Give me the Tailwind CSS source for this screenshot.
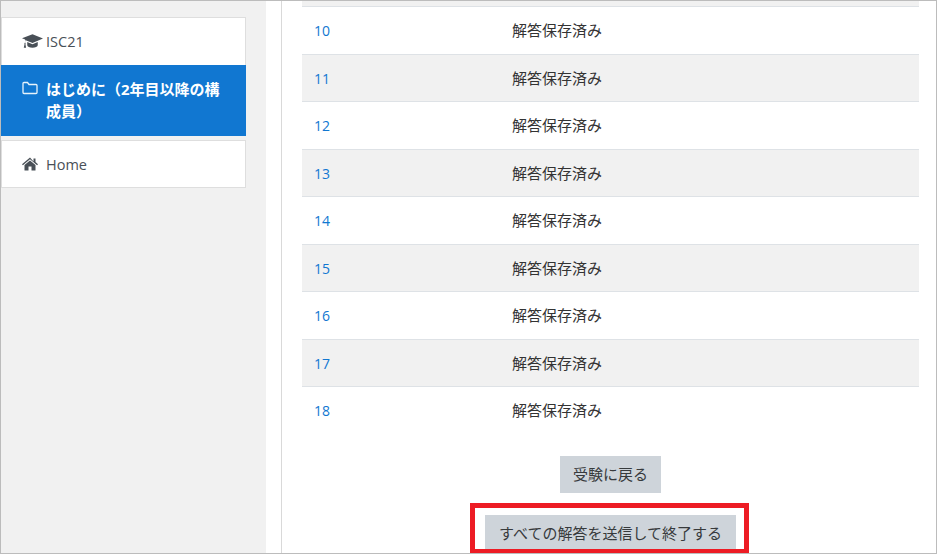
<!DOCTYPE html>
<html lang="ja">
<head>
<meta charset="utf-8">
<script src="https://cdn.jsdelivr.net/npm/@tailwindcss/browser@4"></script>
</head>
<body class="bg-white">
<div class="relative flex w-[937px] h-[554px] overflow-hidden border border-[#bcbcbc] bg-white text-[15px] text-[#333] font-['Open_Sans','Noto_Sans_CJK_JP',sans-serif]">
  <aside class="w-[265px] shrink-0 bg-[#f1f1f1] pt-4">
    <div class="w-[245px]">
      <div class="flex h-[48px] items-center gap-[3px] border border-[#dedede] border-b-0 bg-white pl-5 text-[#495057]">
        <svg class="w-[21px] h-[17px] shrink-0" viewBox="0 0 20 16"><path fill="#495057" d="M10 1 0 5l3 1.200V9c-.6.3-.8 1-.6 1.600l-.7 3.400h2.200l-.6-3.400c.3-.5.1-1.200-.4-1.600V6.600L10 9.400 20 5.200z"/><path fill="#495057" d="M5 8.400v3.200c0 1.200 2.300 2.400 5 2.400s5-1.200 5-2.400V8.400l-5 2.100z"/></svg>
        <span class="text-[14.5px]">ISC21</span>
      </div>
      <div class="flex h-[71px] items-start gap-[8px] bg-[#1177d1] pl-[21px] pr-4 pt-[13px] font-bold leading-[22px] text-white">
        <svg class="mt-[3px] w-[16px] h-[14px] shrink-0" viewBox="0 0 16 14" fill="none" stroke="#e8f3fb" stroke-width="1.300"><path d="M1 2.500a1 1 0 0 1 1-1h3.500l1.500 2h7a1 1 0 0 1 1 1v7a1 1 0 0 1-1 1H2a1 1 0 0 1-1-1z"/></svg>
        <span>はじめに（2年目以降の構成員）</span>
      </div>
      <div class="mt-1 flex h-[48px] items-center gap-[8px] border border-[#dedede] bg-white pl-5 text-[#495057]">
        <svg class="w-[16px] h-[14px] shrink-0" viewBox="0 0 16 14"><path fill="#495057" d="M8 .5 0 7.200l.9 1L8 2.300l7.100 5.900.9-1-2.500-2.100V1.500h-2v2.900z"/><path fill="#495057" d="M8 3.500 2.500 8v5.500H6.500V9.500h3v4h4V8z"/></svg>
        <span class="pt-px text-[14.5px]">Home</span>
      </div>
    </div>
  </aside>
  <div class="w-[15px] shrink-0"></div>
  <main class="flex-1 border-l border-[#d9d9d9] pl-5 pr-[17px]">
    <div class="h-[6px] border-b border-[#dee2e6] bg-[#f1f1f1]"></div>
    <div class="grid grid-cols-[198px_1fr] items-center h-[48px] border-b border-[#dee2e6] pl-[12px]"><a class="text-[14px] text-[#1177d1]">10</a><span>解答保存済み</span></div>
    <div class="grid grid-cols-[198px_1fr] items-center h-[47px] border-b border-[#dee2e6] bg-[#f1f1f1] pl-[12px]"><a class="text-[14px] text-[#1177d1]">11</a><span>解答保存済み</span></div>
    <div class="grid grid-cols-[198px_1fr] items-center h-[48px] border-b border-[#dee2e6] pl-[12px]"><a class="text-[14px] text-[#1177d1]">12</a><span>解答保存済み</span></div>
    <div class="grid grid-cols-[198px_1fr] items-center h-[47px] border-b border-[#dee2e6] bg-[#f1f1f1] pl-[12px]"><a class="text-[14px] text-[#1177d1]">13</a><span>解答保存済み</span></div>
    <div class="grid grid-cols-[198px_1fr] items-center h-[48px] border-b border-[#dee2e6] pl-[12px]"><a class="text-[14px] text-[#1177d1]">14</a><span>解答保存済み</span></div>
    <div class="grid grid-cols-[198px_1fr] items-center h-[47px] border-b border-[#dee2e6] bg-[#f1f1f1] pl-[12px]"><a class="text-[14px] text-[#1177d1]">15</a><span>解答保存済み</span></div>
    <div class="grid grid-cols-[198px_1fr] items-center h-[48px] border-b border-[#dee2e6] pl-[12px]"><a class="text-[14px] text-[#1177d1]">16</a><span>解答保存済み</span></div>
    <div class="grid grid-cols-[198px_1fr] items-center h-[47px] border-b border-[#dee2e6] bg-[#f1f1f1] pl-[12px]"><a class="text-[14px] text-[#1177d1]">17</a><span>解答保存済み</span></div>
    <div class="grid grid-cols-[198px_1fr] items-center h-[47px] pl-[12px]"><a class="text-[14px] text-[#1177d1]">18</a><span>解答保存済み</span></div>
    <div class="mt-[22px] flex flex-col items-center gap-[22px]">
      <button class="h-[37px] w-[101px] shrink-0 bg-[#ced4da] text-[#373a3c]">受験に戻る</button>
      <button class="h-[37px] w-[251px] shrink-0 bg-[#ced4da] text-[#373a3c]">すべての解答を送信して終了する</button>
    </div>
  </main>
  <div class="absolute left-[469px] top-[502px] h-[51px] w-[279px] border-[5px] border-[#ed1c24]"></div>
</div>
</body>
</html>
